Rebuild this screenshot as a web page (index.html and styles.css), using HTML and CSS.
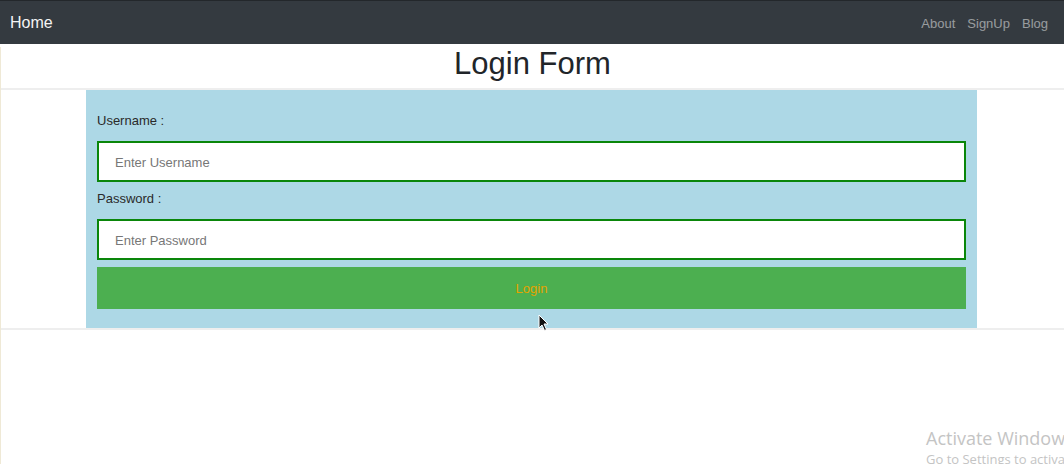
FILE: index.html
```html
<!DOCTYPE html>
<html lang="en">
<head>
<meta charset="utf-8">
<title>Login Form</title>
<link rel="stylesheet" href="styles.css">
</head>
<body>
<nav class="navbar">
  <a class="brand" href="#">Home</a>
  <ul class="nav-links">
    <li><a href="#">About</a></li>
    <li><a href="#">SignUp</a></li>
    <li><a href="#">Blog</a></li>
  </ul>
</nav>
<main class="page">
  <h2 class="title">Login Form</h2>
  <div class="rule"></div>
  <form class="login-box">
    <label class="field-label" for="user">Username :</label>
    <input class="field" id="user" type="text" placeholder="Enter Username">
    <label class="field-label" for="pass">Password :</label>
    <input class="field" id="pass" type="password" placeholder="Enter Password">
    <button class="login-btn" type="button">Login</button>
  </form>
  <div class="rule"></div>
</main>
<svg class="cursor" width="12" height="18" viewBox="0 0 12 18"><path d="M1 1 L1 14 L4 11 L6.5 16.5 L8.5 15.5 L6 10 L10 10 Z" fill="#111" stroke="#fff" stroke-width="1"/></svg>
<div class="watermark">
  <div class="wm-title">Activate Windows</div>
  <div class="wm-sub">Go to Settings to activate Windows.</div>
</div>
</body>
</html>
```
FILE: styles.css
```css
html, body {
  margin: 0;
  padding: 0;
  height: 100%;
  overflow: hidden;
  background: #fff;
  font-family: "Liberation Sans", Arial, sans-serif;
  color: #212529;
}
.navbar {
  height: 44px;
  box-sizing: border-box;
  background: #343a40;
  border-top: 1px solid #23272b;
  display: flex;
  align-items: center;
  justify-content: space-between;
  padding: 0 16px 0 10px;
}
.brand {
  color: #f4f4f4;
  font-size: 16px;
  text-decoration: none;
}
.nav-links {
  list-style: none;
  margin: 0;
  padding: 0;
  display: flex;
  gap: 12px;
}
.nav-links a {
  color: rgba(255, 255, 255, 0.5);
  font-size: 13px;
  text-decoration: none;
}
.page {
  border-left: 1px solid #efe9d6;
  height: calc(100% - 44px);
}
.title {
  margin: 3px 0 8px;
  font-size: 31px;
  line-height: 33px;
  font-weight: 400;
  text-align: center;
}
.rule {
  border-top: 2px solid #eeeeee;
}
.login-box {
  width: 891px;
  box-sizing: border-box;
  margin: 0 auto 0 85px;
  background: #add8e6;
  padding: 14px 11px 19px;
  display: flex;
  flex-direction: column;
}
.field-label {
  font-size: 13px;
  line-height: 18px;
  margin: 7px 0 12px;
  color: #2a2a2a;
  position: relative;
  top: 1px;
}
.field {
  height: 41px;
  box-sizing: border-box;
  border: 2px solid #0a860a;
  padding: 1px 16px 0;
  font-family: "Liberation Sans", Arial, sans-serif;
  font-size: 13px;
  background: #fff;
  outline: none;
}
.field::placeholder {
  color: #777;
}
.login-btn {
  margin-top: 7px;
  height: 42px;
  border: none;
  background: #4caf50;
  color: #e5a300;
  font-family: "Liberation Sans", Arial, sans-serif;
  font-size: 13px;
}
.cursor {
  position: absolute;
  left: 538px;
  top: 314px;
}
.watermark {
  position: absolute;
  left: 926px;
  top: 426px;
  white-space: nowrap;
  font-family: "Open Sans", "Noto Sans", sans-serif;
  color: #c4c4c4;
}
.wm-title {
  font-size: 18px;
  line-height: 24px;
}
.wm-sub {
  font-size: 13px;
  line-height: 18px;
}
```
